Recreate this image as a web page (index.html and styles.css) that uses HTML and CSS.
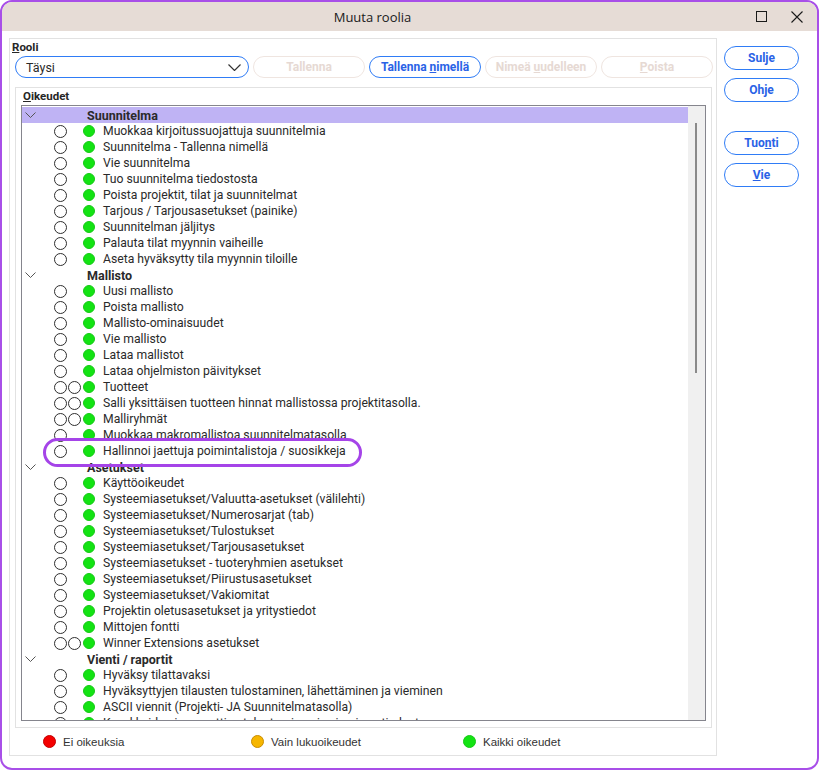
FILE: index.html
```html
<!DOCTYPE html>
<html lang="fi">
<head>
  <meta charset="UTF-8" />
  <title>Muuta roolia</title>
  <link rel="stylesheet" href="styles.css">
</head>
<body>
  <div class="window">
    <div class="titlebar">
      <span class="title">Muuta roolia</span>
      <span class="tb-btn">
        <svg width="11" height="11" viewBox="0 0 11 11"><rect x="0.5" y="0.5" width="10" height="10" fill="none" stroke="#1a1a1a" stroke-width="1"/></svg>
      </span>
      <span class="tb-btn">
        <svg width="12" height="12" viewBox="0 0 12 12"><path d="M0.5 0.5 L11.5 11.5 M11.5 0.5 L0.5 11.5" stroke="#1a1a1a" stroke-width="1.1"/></svg>
      </span>
    </div>

    <div class="content">
      <div class="panel">
        <div class="caption"><u>R</u>ooli</div>
        <div class="controls">
          <div class="combo">
            <span>Täysi</span>
            <svg width="13" height="7" viewBox="0 0 13 7"><path d="M0.5 0.5 L6.5 6.5 L12.5 0.5" fill="none" stroke="#333" stroke-width="1.2"/></svg>
          </div>
          <button class="pill disabled">Tallenna</button>
          <button class="pill">Tallenna <u>n</u>imellä</button>
          <button class="pill disabled">Nimeä <u>u</u>udelleen</button>
          <button class="pill disabled"><u>P</u>oista</button>
        </div>

        <div class="group">
          <div class="caption"><u>O</u>ikeudet</div>
          <div class="tree">
            <div class="rows">
              <div class="row head selected"><span class="chev"><svg width="11" height="6" viewBox="0 0 11 6"><path d="M0.5 0.5 L5.5 5.5 L10.5 0.5" fill="none" stroke="#555" stroke-width="1"/></svg></span>Suunnitelma</div>
              <div class="row"><span class="marks"><i class="ring"></i></span><i class="dot"></i>Muokkaa kirjoitussuojattuja suunnitelmia</div>
              <div class="row"><span class="marks"><i class="ring"></i></span><i class="dot"></i>Suunnitelma - Tallenna nimellä</div>
              <div class="row"><span class="marks"><i class="ring"></i></span><i class="dot"></i>Vie suunnitelma</div>
              <div class="row"><span class="marks"><i class="ring"></i></span><i class="dot"></i>Tuo suunnitelma tiedostosta</div>
              <div class="row"><span class="marks"><i class="ring"></i></span><i class="dot"></i>Poista projektit, tilat ja suunnitelmat</div>
              <div class="row"><span class="marks"><i class="ring"></i></span><i class="dot"></i>Tarjous / Tarjousasetukset (painike)</div>
              <div class="row"><span class="marks"><i class="ring"></i></span><i class="dot"></i>Suunnitelman jäljitys</div>
              <div class="row"><span class="marks"><i class="ring"></i></span><i class="dot"></i>Palauta tilat myynnin vaiheille</div>
              <div class="row"><span class="marks"><i class="ring"></i></span><i class="dot"></i>Aseta hyväksytty tila myynnin tiloille</div>

              <div class="row head"><span class="chev"><svg width="11" height="6" viewBox="0 0 11 6"><path d="M0.5 0.5 L5.5 5.5 L10.5 0.5" fill="none" stroke="#555" stroke-width="1"/></svg></span>Mallisto</div>
              <div class="row"><span class="marks"><i class="ring"></i></span><i class="dot"></i>Uusi mallisto</div>
              <div class="row"><span class="marks"><i class="ring"></i></span><i class="dot"></i>Poista mallisto</div>
              <div class="row"><span class="marks"><i class="ring"></i></span><i class="dot"></i>Mallisto-ominaisuudet</div>
              <div class="row"><span class="marks"><i class="ring"></i></span><i class="dot"></i>Vie mallisto</div>
              <div class="row"><span class="marks"><i class="ring"></i></span><i class="dot"></i>Lataa mallistot</div>
              <div class="row"><span class="marks"><i class="ring"></i></span><i class="dot"></i>Lataa ohjelmiston päivitykset</div>
              <div class="row"><span class="marks"><i class="ring"></i><i class="ring"></i></span><i class="dot"></i>Tuotteet</div>
              <div class="row"><span class="marks"><i class="ring"></i><i class="ring"></i></span><i class="dot"></i>Salli yksittäisen tuotteen hinnat mallistossa projektitasolla.</div>
              <div class="row"><span class="marks"><i class="ring"></i><i class="ring"></i></span><i class="dot"></i>Malliryhmät</div>
              <div class="row"><span class="marks"><i class="ring"></i></span><i class="dot"></i>Muokkaa makromallistoa suunnitelmatasolla</div>
              <div class="row"><span class="marks"><i class="ring"></i></span><i class="dot"></i>Hallinnoi jaettuja poimintalistoja / suosikkeja</div>

              <div class="row head"><span class="chev"><svg width="11" height="6" viewBox="0 0 11 6"><path d="M0.5 0.5 L5.5 5.5 L10.5 0.5" fill="none" stroke="#555" stroke-width="1"/></svg></span>Asetukset</div>
              <div class="row"><span class="marks"><i class="ring"></i></span><i class="dot"></i>Käyttöoikeudet</div>
              <div class="row"><span class="marks"><i class="ring"></i></span><i class="dot"></i>Systeemiasetukset/Valuutta-asetukset (välilehti)</div>
              <div class="row"><span class="marks"><i class="ring"></i></span><i class="dot"></i>Systeemiasetukset/Numerosarjat (tab)</div>
              <div class="row"><span class="marks"><i class="ring"></i></span><i class="dot"></i>Systeemiasetukset/Tulostukset</div>
              <div class="row"><span class="marks"><i class="ring"></i></span><i class="dot"></i>Systeemiasetukset/Tarjousasetukset</div>
              <div class="row"><span class="marks"><i class="ring"></i></span><i class="dot"></i>Systeemiasetukset - tuoteryhmien asetukset</div>
              <div class="row"><span class="marks"><i class="ring"></i></span><i class="dot"></i>Systeemiasetukset/Piirustusasetukset</div>
              <div class="row"><span class="marks"><i class="ring"></i></span><i class="dot"></i>Systeemiasetukset/Vakiomitat</div>
              <div class="row"><span class="marks"><i class="ring"></i></span><i class="dot"></i>Projektin oletusasetukset ja yritystiedot</div>
              <div class="row"><span class="marks"><i class="ring"></i></span><i class="dot"></i>Mittojen fontti</div>
              <div class="row"><span class="marks"><i class="ring"></i><i class="ring"></i></span><i class="dot"></i>Winner Extensions asetukset</div>

              <div class="row head"><span class="chev"><svg width="11" height="6" viewBox="0 0 11 6"><path d="M0.5 0.5 L5.5 5.5 L10.5 0.5" fill="none" stroke="#555" stroke-width="1"/></svg></span>Vienti / raportit</div>
              <div class="row"><span class="marks"><i class="ring"></i></span><i class="dot"></i>Hyväksy tilattavaksi</div>
              <div class="row"><span class="marks"><i class="ring"></i></span><i class="dot"></i>Hyväksyttyjen tilausten tulostaminen, lähettäminen ja vieminen</div>
              <div class="row"><span class="marks"><i class="ring"></i></span><i class="dot"></i>ASCII viennit (Projekti- JA Suunnitelmatasolla)</div>
              <div class="row"><span class="marks"><i class="ring"></i></span><i class="dot"></i>Kuvakkeiden ja raporttien tulostaminen ja vieminen tiedostoon</div>
            </div>
            <div class="scrollbar"><div class="thumb"></div></div>
          </div>
        </div>

        <div class="legend">
          <div class="legend-item"><i class="dot red"></i>Ei oikeuksia</div>
          <div class="legend-item"><i class="dot orange"></i>Vain lukuoikeudet</div>
          <div class="legend-item"><i class="dot"></i>Kaikki oikeudet</div>
        </div>
      </div>

      <div class="side">
        <button class="pill">Sulje</button>
        <button class="pill">Ohje</button>
        <button class="pill gap">Tuo<u>n</u>ti</button>
        <button class="pill"><u>V</u>ie</button>
      </div>
    </div>

    <!-- highlight marker -->
    <div class="marker"></div>
  </div>
</body>
</html>
```

FILE: styles.css
```css
body {
  margin: 0;
  font-family: Roboto, "Liberation Sans", sans-serif;
  background-color: #ffffff;
}
.window {
  position: relative;
  width: 819px;
  height: 770px;
  box-sizing: border-box;
  border: 2px solid #a84fe8;
  border-radius: 12px;
  overflow: hidden;
  background-color: #ffffff;
}
.titlebar {
  display: flex;
  align-items: center;
  height: 29px;
  background-color: #e6dcd6;
}
.title {
  flex: 1;
  text-align: center;
  font-family: "Open Sans", sans-serif;
  font-size: 13px;
  color: #1a1a1a;
}
.tb-btn {
  display: flex;
  align-items: center;
  justify-content: center;
  width: 36px;
  height: 29px;
}
.tb-btn:last-child {
  margin-right: 2px;
}
.content {
  display: flex;
  padding: 7px 0 0 7px;
}
.panel {
  width: 708px;
  height: 718px;
  box-sizing: border-box;
  border: 1px solid #e2e2e2;
}
.caption {
  margin: 1px 0 0 2px;
  height: 15px;
  line-height: 15px;
  font-size: 11.5px;
  font-weight: bold;
  color: #262626;
}
.controls {
  display: flex;
  gap: 4px;
  margin: 1px 0 0 5px;
}
.combo {
  display: flex;
  align-items: center;
  justify-content: space-between;
  width: 234px;
  height: 22px;
  box-sizing: border-box;
  padding: 0 7px 0 10px;
  border: 1px solid #2f7cf6;
  border-radius: 11px;
  font-size: 12.5px;
  color: #2a2a2a;
}
.pill {
  width: 112px;
  height: 22px;
  padding: 0;
  border: 1px solid #2f7cf6;
  border-radius: 11px;
  background-color: #ffffff;
  font-family: Roboto, sans-serif;
  font-size: 12px;
  font-weight: bold;
  color: #2a62e6;
}
.pill.disabled {
  border-color: #efe5e0;
  color: #e6d9d3;
}
.group {
  width: 697px;
  height: 641px;
  box-sizing: border-box;
  margin: 9px 0 0 5px;
  padding: 0 5px 0 5px;
  border: 1px solid #e2e2e2;
}
.group .caption {
  margin: 1px 0 0 2px;
}
.tree {
  display: flex;
  width: 685px;
  height: 616px;
  box-sizing: border-box;
  margin-top: 1px;
  border: 1px solid #85858d;
  overflow: hidden;
}
.rows {
  flex: 1;
  padding-top: 1px;
  overflow: hidden;
}
.row {
  display: flex;
  align-items: center;
  height: 16px;
  padding-left: 32px;
  font-size: 12.2px;
  color: #2a2a2a;
  white-space: nowrap;
}
.row.head {
  padding-left: 3px;
  font-size: 12.5px;
  font-weight: bold;
}
.row.selected {
  background-color: #bfb3f4;
}
.chev {
  display: inline-flex;
  width: 62px;
}
.marks {
  display: flex;
  gap: 1px;
  width: 29px;
}
.ring {
  display: block;
  width: 13px;
  height: 13px;
  box-sizing: border-box;
  border: 1px solid #2e2e2e;
  border-radius: 50%;
}
.dot {
  display: block;
  width: 12px;
  height: 12px;
  margin-right: 8px;
  box-sizing: border-box;
  border: 1px solid #16c916;
  border-radius: 50%;
  background-color: #13e313;
}
.dot.red {
  border-color: #c40000;
  background-color: #f40000;
}
.dot.orange {
  border-color: #c98c00;
  background-color: #f6b600;
}
.scrollbar {
  width: 17px;
  background-color: #f0f0f0;
}
.thumb {
  width: 2px;
  height: 250px;
  margin: 17px 0 0 7px;
  background-color: #8a8a8a;
}
.legend {
  display: grid;
  grid-template-columns: 208px 212px auto;
  align-items: center;
  height: 27px;
  padding-left: 33px;
}
.legend-item {
  display: flex;
  align-items: center;
  font-family: "Liberation Sans", sans-serif;
  font-size: 11.5px;
  color: #333333;
}
.legend-item .dot {
  width: 13px;
  height: 13px;
  margin-right: 7px;
}
.side {
  display: flex;
  flex-direction: column;
  gap: 8px;
  margin: 8px 0 0 7px;
}
.side .pill {
  width: 75px;
  height: 24px;
  border-radius: 12px;
}
.side .gap {
  margin-top: 21px;
}
.marker {
  position: absolute;
  left: 41px;
  top: 436px;
  width: 319px;
  height: 29px;
  box-sizing: border-box;
  border: 3px solid #a544e8;
  border-radius: 15px;
}
```
